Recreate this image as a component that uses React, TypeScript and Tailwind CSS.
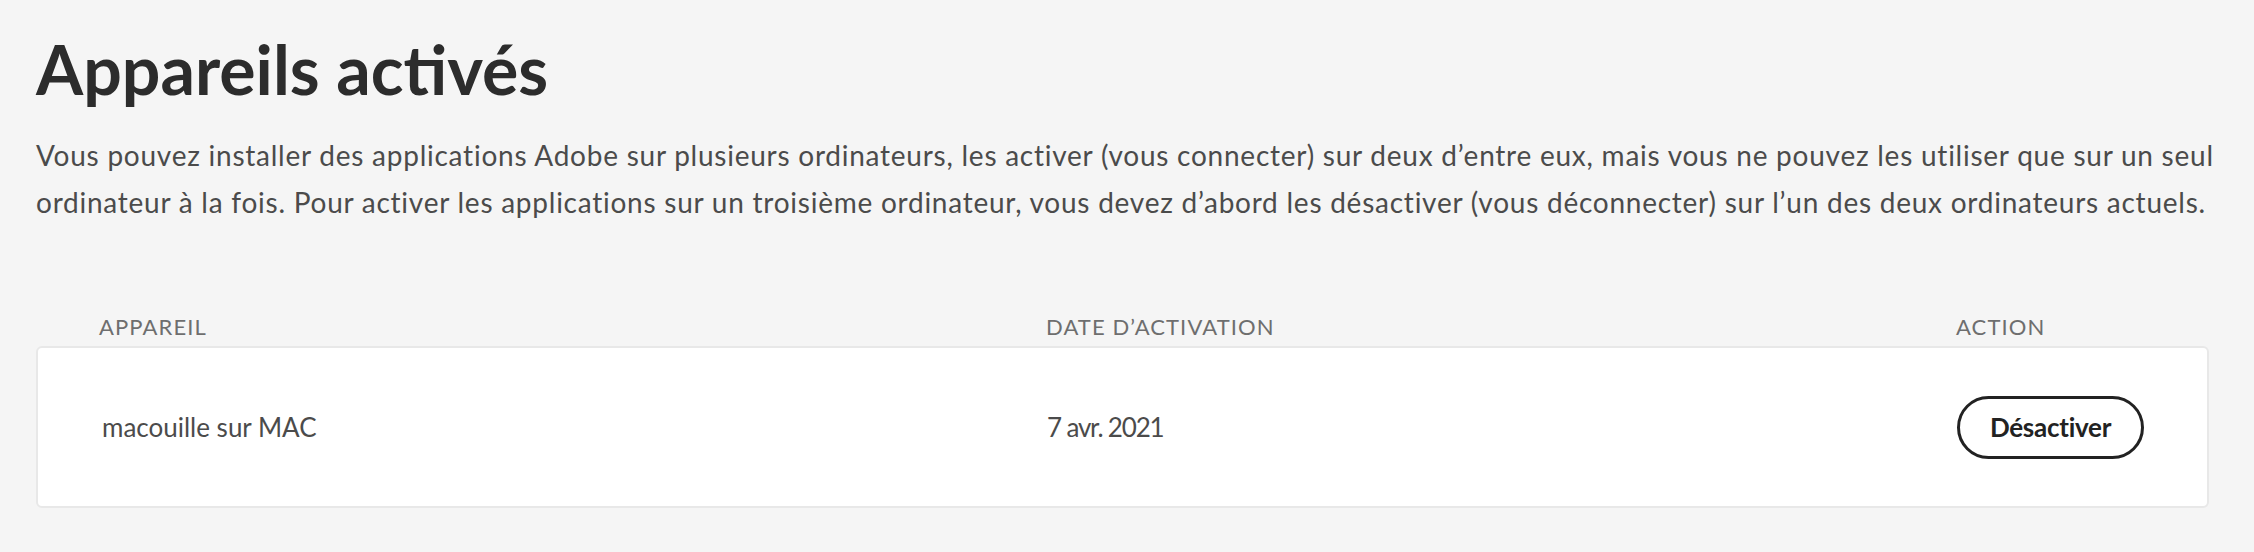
import React from "react";

export default function App() {
  return (
    <div
      className="min-h-[552px] w-full bg-[#f5f5f5] pl-[36px] pr-[45px] pt-[35px]"
      style={{ fontFamily: "Lato, 'Noto Sans', sans-serif" }}
    >
      <h1 className="text-[68px] leading-[68px] font-bold text-[#2c2c2c]">
        Appareils activés
      </h1>
      <p className="mt-[29px] -mr-[40px] text-[28px] leading-[47px] text-[#4b4b4b] tracking-[0.027em]">
        Vous pouvez installer des applications Adobe sur plusieurs ordinateurs, les activer (vous connecter) sur deux d’entre eux, mais vous ne pouvez les utiliser que sur un seul
        <br />
        ordinateur à la fois. Pour activer les applications sur un troisième ordinateur, vous devez d’abord les désactiver (vous déconnecter) sur l’un des deux ordinateurs actuels.
      </p>

      <div className="mt-[88px]">
        <div className="grid grid-cols-[947px_910px_1fr] pl-[63px] text-[22px] leading-[26px] tracking-[0.05em] text-[#6e6e6e]">
          <div>APPAREIL</div>
          <div>DATE D’ACTIVATION</div>
          <div>ACTION</div>
        </div>
        <div className="mt-[6px] h-[162px] rounded-[6px] border-2 border-[#e8e8e8] bg-white">
          <div className="grid h-full grid-cols-[945px_910px_1fr] items-center pl-[64px] text-[26px] text-[#4b4b4b]">
            <div>macouille sur MAC</div>
            <div className="tracking-[-0.045em]">7 avr. 2021</div>
            <div>
              <button className="h-[63px] w-[187px] rounded-full border-[3.5px] border-[#222222] bg-white text-[26px] font-bold text-[#222222] tracking-[-0.01em]">
                Désactiver
              </button>
            </div>
          </div>
        </div>
      </div>
    </div>
  );
}
